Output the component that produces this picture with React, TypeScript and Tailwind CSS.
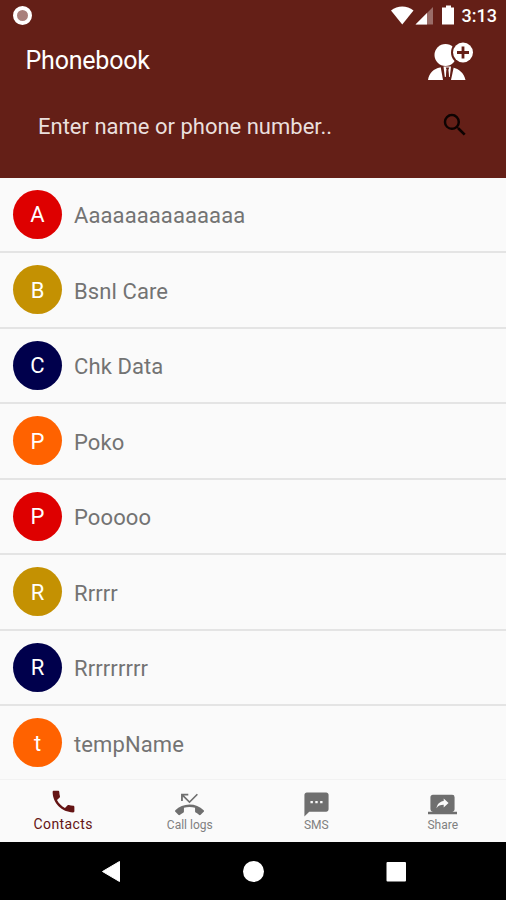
import React from 'react';
import { MdPhone, MdPhoneMissed, MdScreenShare, MdSearch, MdSms } from 'react-icons/md';

const contacts = [
  { name: 'Aaaaaaaaaaaaaa', color: 'bg-[#de0000]' },
  { name: 'Bsnl Care', color: 'bg-[#c49102]' },
  { name: 'Chk Data', color: 'bg-[#00004c]' },
  { name: 'Poko', color: 'bg-[#ff6200]' },
  { name: 'Pooooo', color: 'bg-[#de0000]' },
  { name: 'Rrrrr', color: 'bg-[#c49102]' },
  { name: 'Rrrrrrrrr', color: 'bg-[#00004c]' },
  { name: 'tempName', color: 'bg-[#ff6200]' },
];

const tabs = [
  { label: 'Contacts', icon: MdPhone, active: true },
  { label: 'Call logs', icon: MdPhoneMissed, active: false },
  { label: 'SMS', icon: MdSms, active: false },
  { label: 'Share', icon: MdScreenShare, active: false },
];

function StatusBar() {
  return (
    <div className="flex h-[31px] items-center pl-[13px] pr-[9px]">
      <div className="h-[19px] w-[19px] rounded-full border-4 border-white bg-[#a9807c]" />
      <svg className="ml-auto" width="66" height="31" viewBox="0 0 66 31" fill="white">
        <path d="M1 10.5C7.5 5 17 5 23.5 10.5L12.25 24.5Z" />
        <path d="M43 7V24.5H25.5Z" opacity="0.35" />
        <path d="M37 13V24.5H25.5Z" />
        <path d="M56 5.5h5v2h3v17h-12v-17h4z" />
      </svg>
      <span className="ml-[6px] text-[18px] font-medium leading-none">3:13</span>
    </div>
  );
}

function AddContactIcon() {
  return (
    <svg width="46" height="40" viewBox="0 0 46 40" fill="none">
      <circle cx="17.5" cy="13" r="11" fill="white" />
      <path d="M0 38C1 31 6 26.5 12 25.5c4-1.5 9-1.5 13 0C31 27 36 31 37.5 38z" fill="white" />
      {/* jacket lapels, shirt and tie */}
      <path d="M12.5 24l2.500 14h8l3-14z" fill="#641f17" />
      <path d="M15.500 24.500h7.500L21.800 35h-1l-.8-7h-1.400l-.8 7h-1z" fill="white" />
      <path d="M17.800 25.500h3.400l-.8 2.500.6 8h-3l.6-8z" fill="#641f17" />
      <circle cx="35" cy="10.500" r="12" fill="#641f17" />
      <circle cx="35" cy="10.500" r="10" fill="white" />
      <path d="M35 4.500v12M29 10.500h12" stroke="#641f17" strokeWidth="2.800" />
    </svg>
  );
}

function Header() {
  return (
    <header className="h-[177.5px] bg-[#641f17] text-white">
      <StatusBar />
      <div className="flex h-[58px] items-center justify-between pl-[25.5px] pr-8 pt-[3px]">
        <h1 className="pb-[3px] text-[25px] leading-none tracking-[-0.2px]">Phonebook</h1>
        <AddContactIcon />
      </div>
      <div className="flex h-[72px] items-center justify-between pl-[38px] pr-9">
        <span className="pt-[3px] text-[22px] leading-none text-[#eadfdd]">Enter name or phone number..</span>
        <MdSearch className="text-[30px] text-[#0d0302]" />
      </div>
    </header>
  );
}

function ContactList() {
  return (
    <ul className="h-[601.5px] overflow-hidden">
      {contacts.map((contact) => (
        <li
          key={contact.name}
          className="flex h-[75.5px] items-center gap-3 border-b-2 border-[#e4e4e4] pl-[13px]"
        >
          <div
            className={`flex h-[49px] w-[49px] items-center justify-center rounded-full pt-[2px] text-[22px] leading-none text-white ${contact.color}`}
          >
            {contact.name[0]}
          </div>
          <span className="pt-[4px] text-[22px] leading-none tracking-[0.1px] text-[#737373]">
            {contact.name}
          </span>
        </li>
      ))}
    </ul>
  );
}

function BottomTabs() {
  return (
    <nav className="grid h-[62.5px] grid-cols-4 border-t border-[#f2f2f2]">
      {tabs.map(({ label, icon: Icon, active }) => (
        <div
          key={label}
          className={`flex flex-col items-center ${active ? 'pt-[7px] text-[#641414]' : 'pt-[10px] text-[#6f6f6f]'}`}
        >
          <Icon className="text-[29px]" />
          <span
            className={
              active
                ? 'text-[14px] leading-4 tracking-[0.4px]'
                : 'text-[12px] leading-3 text-[#808080]'
            }
          >
            {label}
          </span>
        </div>
      ))}
    </nav>
  );
}

function NavigationBar() {
  return (
    <div className="h-[58.5px] bg-black">
      <svg width="506" height="58" viewBox="0 0 506 58" fill="white">
        <path d="M102.5 29.5L119.5 19.5V39.5Z" stroke="white" strokeLinejoin="round" />
        <circle cx="253.5" cy="29.5" r="10.5" />
        <rect x="386.5" y="20" width="19.5" height="19.5" rx="1" />
      </svg>
    </div>
  );
}

export default function App() {
  return (
    <div className="h-[900px] w-[506px] overflow-hidden bg-[#fafafa] font-[Roboto,sans-serif]">
      <Header />
      <ContactList />
      <BottomTabs />
      <NavigationBar />
    </div>
  );
}
